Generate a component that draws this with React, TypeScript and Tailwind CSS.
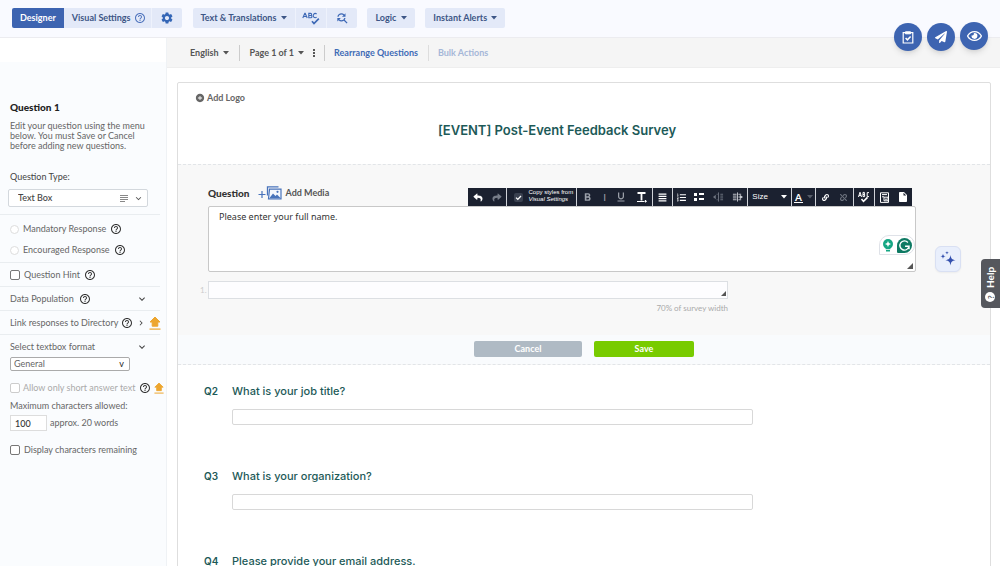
import React from 'react';
import { FaAlignJustify, FaLink, FaListOl, FaListUl, FaPaperPlane, FaRegEye, FaReply, FaShare, FaUnlink } from 'react-icons/fa';
import {
  MdAddCircle,
  MdFindReplace,
  MdFormatBold,
  MdFormatUnderlined,
  MdHelpOutline,
  MdInsertDriveFile,
  MdKeyboardArrowDown,
  MdKeyboardArrowRight,
  MdMoreVert,
  MdSettings,
} from 'react-icons/md';

const Caret = ({ className = '' }: { className?: string }) => (
  <svg viewBox="0 0 6 4" className={`w-[6px] h-1 fill-current ${className}`} aria-hidden="true">
    <path d="M0 0h6L3 3.500z" />
  </svg>
);

const ResizeHandle = ({ className }: { className: string }) => (
  <svg viewBox="0 0 8 8" className={`absolute pointer-events-none fill-[#555] ${className}`} aria-hidden="true">
    <path d="M8 0v8H0z" />
  </svg>
);

const SpellCheck = ({ className }: { className: string }) => (
  <svg viewBox="0 0 18 13" className={className} fill="none" stroke="currentColor" aria-hidden="true">
    <g strokeWidth="1.1">
      <path d="M.8 6 2.800 1.200h.4L5.200 6M1.600 4.500h2.800" />
      <path d="M6.800 1.400V5.800h2a1.150 1.150 0 0 0 0-2.300H6.800h1.800a1 1 0 0 0 0-2.100z" />
      <path d="M14.600 2a2 2.200 0 1 0 0 3.200" />
    </g>
    <path d="M10 9.200 12 11.500 16.800 6.600" strokeWidth="1.700" />
  </svg>
);

const UpgradeIcon = ({ className = '' }: { className?: string }) => (
  <svg viewBox="0 0 12 14" className={`shrink-0 fill-[#eda62f] ${className}`} aria-label="Upgrade">
    <path d="M6 1 11 6H8.800v4.200H3.200V6H1z" stroke="#eda62f" strokeWidth="1" strokeLinejoin="round" />
    <path d="M.5 12.500h11v1.200H.5z" />
  </svg>
);

const Help = ({ label }: { label: string }) => (
  <button type="button" aria-label={`Help: ${label}`} className="shrink-0 text-[#333]">
    <MdHelpOutline className="w-3 h-3" />
  </button>
);

const TopBar = () => (
  <header className="flex h-[38px] shrink-0 bg-[#f9faff] border-b border-[#ececf0] pl-3 pt-2 text-[9px] font-bold text-[#3d5686]">
    <nav className="flex items-stretch h-5">
      <a href="#designer" className="flex items-center px-2 rounded-l-xs bg-[#3d64b1] text-white">Designer</a>
      <a href="#visual" className="flex items-center gap-[3px] pl-2 pr-[5px] bg-[#e3e9f8] border-r border-[#eef2fc]">
        Visual Settings
        <MdHelpOutline className="w-3 h-3 text-[#4f74bd]" />
      </a>
      <button type="button" aria-label="Settings" className="px-2 rounded-r-xs bg-[#e3e9f8] text-[#3466b6]">
        <MdSettings className="w-[14px] h-[14px]" />
      </button>
    </nav>
    <div className="flex items-stretch h-5 ml-[11px] rounded-xs bg-[#e3e9f8]">
      <button type="button" className="flex items-center gap-[5px] px-2">
        Text &amp; Translations <Caret />
      </button>
      <button type="button" aria-label="Spell check" className="px-[6px] border-x border-[#eef2fc] text-[#3d68b5]">
        <SpellCheck className="w-[18px] h-[13px]" />
      </button>
      <button type="button" aria-label="Find and replace" className="px-2 text-[#3d68b5]">
        <MdFindReplace className="w-[14px] h-[14px]" />
      </button>
    </div>
    <button type="button" className="flex items-center gap-[5px] h-5 ml-[10px] px-2 rounded-xs bg-[#e3e9f8]">
      Logic <Caret />
    </button>
    <button type="button" className="flex items-center gap-1 h-5 ml-[10px] px-2 rounded-xs bg-[#e3e9f8]">
      Instant Alerts <Caret />
    </button>
  </header>
);

const SubBar = () => (
  <div className="flex items-center h-[30px] shrink-0 bg-[#f5f5f5] border-b border-[#eeeeee] pl-[23px] text-[9px] leading-4 font-bold text-[#555]">
    <button type="button" className="flex items-center gap-[5px] pr-[10px]">English <Caret /></button>
    <button type="button" className="flex items-center gap-1 h-4 border-l border-[#ccc] pl-[9px]">Page 1 of 1 <Caret /></button>
    <button type="button" aria-label="More" className="px-1 text-[#333]"><MdMoreVert className="w-3 h-3" /></button>
    <a href="#rearrange" className="flex items-center h-4 border-l border-[#ccc] pl-[9px] pr-[10px] text-[#3f6bb5]">Rearrange Questions</a>
    <button type="button" disabled className="h-4 border-l border-[#ddd] pl-[9px] text-[#a5b7d8]">Bulk Actions</button>
  </div>
);

const Sidebar = () => (
  <aside className="w-[167px] shrink-0 border-r border-[#eff2f5] bg-[#fafcfe] text-[9px] text-[#666]">
    <div className="h-6 bg-white" />
    <div className="px-[10px] pt-[38px]">
      <h2 className="text-[10px] leading-[14px] font-black text-[#222]">Question 1</h2>
      <p className="mt-[7px] leading-[10px] w-[140px]">
        Edit your question using the menu below. You must Save or Cancel before adding new questions.
      </p>
      <label htmlFor="qtype" className="block mt-5 leading-[12px] text-[#444]">Question Type:</label>
    </div>
    <div className="relative mx-2 mt-[6px] w-[140px]">
      <select id="qtype" className="appearance-none block w-full h-[18px] pl-[9px] rounded-xs border border-[#d3d8dd] bg-white text-[#444] font-medium">
        <option>Text Box</option>
      </select>
      <svg viewBox="0 0 8 7" className="absolute right-5 top-[6px] w-2 h-[7px] fill-[#888] pointer-events-none" aria-hidden="true">
        <path d="M0 0h8v1H0zM0 2h8v1H0zM0 4h8v1H0zM0 6h5v1H0z" />
      </svg>
      <MdKeyboardArrowDown className="absolute right-1 top-1 w-[11px] h-[11px] text-[#555] pointer-events-none" />
    </div>

    <div className="w-40 mt-[7px] pl-[10px] pt-1 h-[49px] border-y border-[#e9edf0]">
      <label className="flex items-center gap-1 h-5">
        <input type="radio" name="response" className="appearance-none w-[9px] h-[9px] rounded-full border border-[#ddd] bg-white" />
        Mandatory Response <Help label="Mandatory Response" />
      </label>
      <label className="flex items-center gap-1 h-[22px]">
        <input type="radio" name="response" className="appearance-none w-[9px] h-[9px] rounded-full border border-[#ddd] bg-white" />
        Encouraged Response <Help label="Encouraged Response" />
      </label>
    </div>
    <label className="flex items-center gap-1 w-40 h-6 pl-[10px] border-b border-[#e9edf0]">
      <input type="checkbox" className="appearance-none w-[10px] h-[10px] rounded-xs border border-[#777] bg-white" />
      Question Hint <Help label="Question Hint" />
    </label>
    <div className="flex items-center gap-[5px] w-40 h-6 pl-[10px] pr-3 border-b border-[#e9edf0]">
      Data Population <Help label="Data Population" />
      <button type="button" aria-label="Expand data population" className="ml-auto text-[#444]"><MdKeyboardArrowDown className="w-3 h-3" /></button>
    </div>
    <div className="flex items-center gap-[3px] w-40 h-6 pl-[10px] pr-[2px] border-b border-[#e9edf0] whitespace-nowrap">
      Link responses to Directory <Help label="Link responses to Directory" />
      <button type="button" aria-label="Open directory" className="text-[#444] ml-auto"><MdKeyboardArrowRight className="w-[10px] h-3" /></button>
      <UpgradeIcon className="w-3 h-[14px]" />
    </div>
    <div className="flex items-center justify-between w-40 h-[22px] pt-[2px] pl-[10px] pr-3">
      <label htmlFor="format">Select textbox format</label>
      <MdKeyboardArrowDown className="w-3 h-3 text-[#444]" />
    </div>
    <div className="relative ml-[10px] w-[120px]">
      <select id="format" className="appearance-none block w-full h-[14px] pl-[3px] rounded-xs border border-[#aaa] bg-white leading-[12px]">
        <option>General</option>
      </select>
      <span className="absolute right-[6px] top-0 leading-[14px] text-[#222] pointer-events-none">v</span>
    </div>
    <div className="flex items-center gap-[3px] mt-[11px] h-3 pl-[10px] whitespace-nowrap text-[#aaa]">
      <input id="short" type="checkbox" disabled className="appearance-none shrink-0 w-[10px] h-[10px] rounded-xs border border-[#ccc] bg-white" />
      <label htmlFor="short">Allow only short answer text</label>
      <Help label="Allow only short answer text" />
      <UpgradeIcon className="w-[10px] h-[12px]" />
    </div>
    <label htmlFor="max" className="block mt-[6px] pl-[10px] leading-[12px]">Maximum characters allowed:</label>
    <div className="flex items-center gap-[3px] mt-[3px] pl-[10px]">
      <input id="max" type="text" defaultValue="100" className="w-[37px] h-4 pl-1 border border-[#ddd] bg-white text-[#333] font-medium" />
      approx. 20 words
    </div>
    <label className="flex items-center gap-1 mt-[13px] h-3 pl-[10px]">
      <input type="checkbox" className="appearance-none w-[10px] h-[10px] rounded-xs border border-[#777] bg-white" />
      Display characters remaining
    </label>
  </aside>
);

const group = 'flex items-center justify-around h-full border-l border-[#cfd2d8] first:border-l-0';

const EditorToolbar = () => (
  <div role="toolbar" aria-label="Formatting" className="flex h-[18px] bg-[#1b2130] text-white">
    <div className={`${group} w-[38px]`}>
      <button type="button" aria-label="Undo"><FaReply className="w-[10px] h-[9px]" /></button>
      <button type="button" aria-label="Redo" className="text-[#777d89]"><FaShare className="w-[10px] h-[9px]" /></button>
    </div>
    <label className={`${group} w-[70px] pl-1 text-[6px] leading-[7px] whitespace-nowrap font-['Liberation_Sans',sans-serif]`}>
      <span className="relative flex">
        <input type="checkbox" defaultChecked className="appearance-none w-[9px] h-[9px] bg-[#3a4150] rounded-xs" />
        <svg viewBox="0 0 9 9" className="absolute inset-0 w-[9px] h-[9px] pointer-events-none" fill="none" stroke="#fff" strokeWidth="1.300">
          <path d="m2 4.600 1.800 1.800L7 3" />
        </svg>
      </span>
      <span className="pb-[2px]">Copy styles from<br /><i>Visual Settings</i></span>
    </label>
    <div className={`${group} w-[76px] text-[#9ba0a9]`}>
      <button type="button" aria-label="Bold"><MdFormatBold className="w-[13px] h-[13px]" /></button>
      <button type="button" aria-label="Italic" className="text-[10px]">I</button>
      <button type="button" aria-label="Underline"><MdFormatUnderlined className="w-3 h-3" /></button>
      <button type="button" aria-label="Remove format" className="text-white">
        <svg viewBox="0 0 12 12" className="w-3 h-3" fill="none" stroke="currentColor">
          <path d="M1.500 2h8M5.500 2v7.500" strokeWidth="1.800" />
          <path d="M1 10.500h7M9.500 9v2.500M8.300 10.300h2.600" strokeWidth="1" />
        </svg>
      </button>
    </div>
    <div className={`${group} w-5`}>
      <button type="button" aria-label="Align"><FaAlignJustify className="w-[9px] h-[9px]" /></button>
    </div>
    <div className={`${group} w-[75px]`}>
      <button type="button" aria-label="Numbered list"><FaListOl className="w-[9px] h-[9px]" /></button>
      <button type="button" aria-label="Bulleted list">
        <svg viewBox="0 0 10 8" className="w-[10px] h-2 fill-current">
          <path d="M0 0h3v3H0zM0 5h3v3H0zM5 0h5v2H5zM5 5h5v2H5z" />
        </svg>
      </button>
      <button type="button" aria-label="Decrease indent" className="text-[#6f7581]">
        <svg viewBox="0 0 12 10" className="w-[11px] h-[10px]" stroke="currentColor" fill="currentColor">
          <path d="M6 0v10M8 2h3M8 4h3M8 6h3M8 8h3M4 2h1M4 8h1" />
          <path d="M0 5l3-2.500v5z" stroke="none" />
        </svg>
      </button>
      <button type="button" aria-label="Increase indent" className="text-[#c9ccd2]">
        <svg viewBox="0 0 12 10" className="w-[11px] h-[10px]" stroke="currentColor" fill="currentColor">
          <path d="M6 0v10M1 2h4M1 4h4M1 6h4M1 8h4M7 2h3M7 8h3M7 5h2" />
          <path d="M12 5 8.500 2.500v5z" stroke="none" />
        </svg>
      </button>
    </div>
    <button type="button" className={`${group} w-[44px] text-[8px] font-medium font-['Liberation_Sans',sans-serif]`}>
      Size <Caret className="ml-1" />
    </button>
    <button type="button" aria-label="Text colour" className={`${group} w-6`}>
      <span className="text-[10px] leading-[10px] font-bold border-b border-white px-px">A</span>
      <Caret className="text-[#555b67]" />
    </button>
    <div className={`${group} w-[38px]`}>
      <button type="button" aria-label="Link"><FaLink className="w-[7px] h-[7px]" /></button>
      <button type="button" aria-label="Unlink" className="text-[#6f7581]"><FaUnlink className="w-[7px] h-[7px]" /></button>
    </div>
    <div className={`${group} w-[21px]`}>
      <button type="button" aria-label="Check spelling">
        <svg viewBox="0 0 12 12" className="w-3 h-3" fill="none" stroke="currentColor">
          <path d="M.5 6 2 1.200 3.500 6M1 4.400h2M5 1.400v4.200h1.600V3.500H5h1.400V1.400zM11 1.600H9.200v4H11" />
          <path d="m3.500 8 2 2.400L9.500 6.400" strokeWidth="1.600" />
        </svg>
      </button>
    </div>
    <div className={`${group} flex-1`}>
      <button type="button" aria-label="Paste from Word">
        <svg viewBox="0 0 11 11" className="w-[11px] h-[11px]" fill="none" stroke="currentColor">
          <path d="M1.500.8h8v9.600h-8zM3 2.600h5M3 4.800h2M5 5.200h4v3.600H5z" />
          <path d="M6 7.200h2" />
        </svg>
      </button>
      <button type="button" aria-label="New page"><MdInsertDriveFile className="w-3 h-3" /></button>
    </div>
  </div>
);

const GrammarBadge = () => (
  <div className="absolute right-px bottom-[17px] flex items-center justify-center gap-[3px] w-9 h-[20px] rounded-t-full rounded-br-full border border-[#dfe2e8] bg-white">
    <svg viewBox="0 0 12 14" className="w-3 h-[14px]" aria-hidden="true">
      <circle cx="6" cy="6" r="5" fill="#15a683" />
      <path d="M3.600 9h4.800v2.200H3.600zM4 12h4v1.400H4z" fill="#15a683" />
      <path d="M6 3l.9 2.100L9 6l-2.100.9L6 9l-.9-2.100L3 6l2.100-.9z" fill="#fff" />
    </svg>
    <svg viewBox="0 0 16 16" className="w-[15px] h-[15px]" aria-hidden="true">
      <path d="M8 0a8 8 0 1 1 0 16H1.200A1.200 1.200 0 0 1 0 14.800V8a8 8 0 0 1 8-8z" fill="#0e7a63" />
      <path d="M11.600 4.700A4.900 4.900 0 1 0 12.800 8.800H8.600M12.800 8.800V12" fill="none" stroke="#fff" strokeWidth="1.500" />
    </svg>
  </div>
);

const QuestionEditor = () => (
  <section className="border-y border-dashed border-[#e2e5e8] bg-[#f8f8f8]">
    <div className="flex items-end gap-[19px] pl-[30px] pr-[29px] pt-[19px]">
      <div className="flex-1 min-w-0">
        <div className="flex items-end">
          <label htmlFor="question" className="text-[10px] leading-[18px] pb-1 font-black text-[#333]">Question</label>
          <button type="button" className="flex items-center gap-1 ml-2 pb-1 text-[9px] leading-[18px] font-bold text-[#555]">
            <svg viewBox="0 0 24 14" className="w-6 h-[14px]" fill="none" stroke="#4873bb" aria-hidden="true">
              <path d="M.5 8.500h7M4 5v7" strokeWidth="1.200" />
              <path d="M9.500 9.500V.9h11" strokeWidth="1.300" />
              <path d="M11.500 3.200h11.500v9.600h-12.500z" fill="#f4f7fd" strokeWidth="1.200" />
              <path d="M11.500 12l3.500-4.500 2.500 2.500 1.500-1.500 3.500 3.500z" fill="#4873bb" stroke="none" />
              <circle cx="19.500" cy="5.800" r="1.100" fill="#4873bb" stroke="none" />
            </svg>
            Add Media
          </button>
          <div className="ml-auto mr-1 w-[444px]"><EditorToolbar /></div>
        </div>
        <div className="relative">
          <textarea
            id="question"
            defaultValue="Please enter your full name."
            className="block w-full h-[66px] resize-none rounded-xs border border-[#c8c8c8] bg-white px-[10px] py-[3px] text-[9px] leading-[13px] text-[#333] font-['Noto_Sans','Open_Sans',sans-serif]"
          />
          <GrammarBadge />
          <ResizeHandle className="right-[3px] bottom-[3px] w-[6px] h-[6px]" />
        </div>
      </div>
      <button type="button" aria-label="AI suggestions" className="flex items-center justify-center w-[26px] h-[26px] shrink-0 rounded-md border border-[#d9e0f3] bg-[#e9effc] shadow-xs">
        <svg viewBox="0 0 18 18" className="w-[18px] h-[18px]" fill="#3450ae" aria-hidden="true">
          <path d="M11.500 5c.6 3.600 1.300 4.500 5 5.200-3.700.7-4.400 1.500-5 5.200-.6-3.700-1.400-4.500-5.100-5.200 3.700-.7 4.500-1.600 5.100-5.200z" />
          <path d="M4 3.700c.3 1.800.8 2.300 2.600 2.600C4.800 6.600 4.300 7 4 8.900 3.700 7 3.200 6.600 1.400 6.300 3.200 6 3.700 5.500 4 3.700zM8 .9c.2 1.200.6 1.600 1.800 1.800-1.200.2-1.600.6-1.800 1.800-.2-1.200-.6-1.600-1.800-1.800C7.400 2.500 7.800 2.100 8 .9z" />
        </svg>
      </button>
    </div>

    <div className="flex mt-[9px] pl-[22px] pr-[2px]">
      <span className="w-2 shrink-0 text-[8px] leading-[18px] text-[#ccc]">1.</span>
      <div className="w-[66%]">
        <div className="relative">
          <textarea aria-label="Answer" className="block w-full h-[18px] resize-none border border-[#dcdfe3] bg-[#fdfdff]" />
          <ResizeHandle className="right-[2px] bottom-[3px] w-[5px] h-[5px]" />
        </div>
        <p className="mt-[3px] text-right text-[8px] leading-[12px] text-[#aaa]">70% of survey width</p>
      </div>
    </div>

    <div className="flex justify-center gap-3 mt-[21px] pt-[6px] pb-[7px] bg-[#f9fbfd] text-[9px] leading-4 font-bold text-white">
      <button type="button" className="w-[108px] rounded-xs bg-[#afbac4]">Cancel</button>
      <button type="button" className="w-[100px] rounded-xs bg-[#78cb00]">Save</button>
    </div>
  </section>
);

const questions = [
  { id: 'Q2', text: 'What is your job title?' },
  { id: 'Q3', text: 'What is your organization?' },
  { id: 'Q4', text: 'Please provide your email address.' },
];

const SurveyCard = () => (
  <div className="mt-[14px] ml-[10px] mr-[9px] border border-[#dedede] rounded-xs bg-white">
    <button type="button" className="flex items-center gap-[2px] pt-2 pl-[17px] text-[9px] leading-[14px] font-bold text-[#666]">
      <MdAddCircle className="w-[10px] h-[10px]" /> Add Logo
    </button>
    <h1 className="pt-4 pb-[25px] pr-[54px] text-center text-[13px] leading-[18px] font-semibold text-[#1d5a58] font-['Inter',sans-serif]">
      [EVENT] Post-Event Feedback Survey
    </h1>
    <QuestionEditor />
    {questions.map((q) => (
      <div key={q.id} className="flex gap-3 h-[85px] pt-[17px] pl-[26px] text-[11px] leading-[18px] font-medium text-[#1d5a58] font-['Inter',sans-serif]">
        <span className="w-4 text-[10px] font-semibold leading-[18px]">{q.id}</span>
        <div className="flex-1">
          <label htmlFor={q.id}>{q.text}</label>
          <input id={q.id} type="text" className="block w-11/16 h-4 mt-[9px] border border-[#d8d8d8] rounded-xs bg-white" />
        </div>
      </div>
    ))}
  </div>
);

const fab = 'flex items-center justify-center w-7 h-7 rounded-full bg-[#3d64b1] text-white shadow-md';

export default function App() {
  return (
    <div className="relative flex flex-col h-screen overflow-hidden bg-white font-['Lato',sans-serif]">
      <TopBar />
      <div className="flex flex-1 min-h-0">
        <Sidebar />
        <main className="flex flex-col flex-1 min-w-0">
          <SubBar />
          <div className="flex-1 min-h-0 overflow-y-auto [scrollbar-width:none]">
            <SurveyCard />
          </div>
        </main>
      </div>

      <div className="absolute right-3 top-[22px] flex items-start gap-[5px]">
        <button type="button" aria-label="Checklist" className={`${fab} mt-px`}>
          <svg viewBox="0 0 12 14" className="w-3 h-[14px]" fill="none" stroke="currentColor" aria-hidden="true">
            <path d="M1.200 2.700h9.600v10.300H1.200z" strokeWidth="1.200" />
            <path d="M3.500 1.800h5v2h-5z" fill="currentColor" />
            <path d="m3.600 8 1.800 1.800L8.600 6.400" strokeWidth="1.500" />
          </svg>
        </button>
        <button type="button" aria-label="Send" className={`${fab} mt-px`}><FaPaperPlane className="w-3 h-3" /></button>
        <button type="button" aria-label="Preview" className={fab}><FaRegEye className="w-[15px] h-[14px]" /></button>
      </div>

      <button
        type="button"
        className="absolute right-0 top-[259px] flex items-center gap-1 w-[19px] h-[49px] pt-[6px] rotate-180 rounded-r-sm bg-[#55575d] text-[10px] font-bold text-white [writing-mode:vertical-rl]"
      >
        <span className="flex items-center justify-center w-[10px] h-[10px] rounded-full bg-white text-[8px] text-[#55575d]">?</span>
        Help
      </button>
    </div>
  );
}
